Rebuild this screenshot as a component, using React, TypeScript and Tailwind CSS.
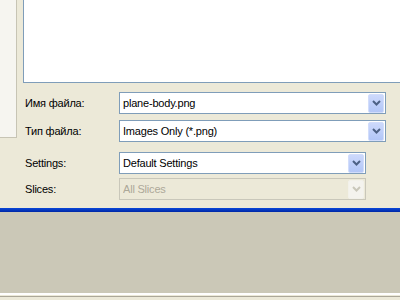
import React from 'react'

function Chevron({ disabled }: { disabled?: boolean }) {
  return (
    <svg width="9" height="6" viewBox="0 0 9 6" className="block">
      <path
        d="M1 1 L4.5 4.5 L8 1"
        fill="none"
        stroke={disabled ? '#c9c7ba' : '#4d6185'}
        strokeWidth="2"
      />
    </svg>
  )
}

function Combo({
  value,
  width,
  disabled,
}: {
  value: string
  width: string
  disabled?: boolean
}) {
  return (
    <div
      className={`flex h-[22px] items-center border pl-[3px] pr-px ${width} ${
        disabled ? 'border-[#c9c7ba] bg-[#ece9d8] text-[#aca899]' : 'border-[#7f9db9] bg-white text-black'
      }`}
    >
      <span className="flex-1 truncate leading-none">{value}</span>
      <div
        className={`flex h-[19px] w-[16px] items-center justify-center rounded-[2px] border ${
          disabled
            ? 'border-[#f2f1ea] bg-[#f4f3ee]'
            : 'border-[#d2ddfb] bg-gradient-to-b from-[#cdd9fc] to-[#b2c6f7]'
        }`}
      >
        <Chevron disabled={disabled} />
      </div>
    </div>
  )
}

function Row({ label, children, mt }: { label: string; children: React.ReactNode; mt: string }) {
  return (
    <div className={`flex items-center ${mt}`}>
      <span className="w-[96px] pl-[2px] leading-none text-black">{label}</span>
      {children}
    </div>
  )
}

export default function App() {
  return (
    <div
      className="relative flex h-[300px] w-[400px] flex-col overflow-hidden bg-[#ece9d8] text-[11px] tracking-[-0.2px]"
      style={{ fontFamily: '"Liberation Sans", Arial, sans-serif' }}
    >
      <div className="flex h-[208px]">
        {/* places bar */}
        <div className="h-[138px] w-[17px] shrink-0 border-r border-b border-[#c7c4b4] bg-[#f6f5f0]" />
        <div className="flex flex-1 flex-col pl-[6px]">
          {/* file list */}
          <div className="h-[83px] w-[400px] border-b border-l border-[#7f9db9] bg-white" />

          <Row label="Имя файла:" mt="mt-[9px]">
            <Combo value="plane-body.png" width="w-[267px]" />
          </Row>
          <Row label="Тип файла:" mt="mt-[6px]">
            <Combo value="Images Only (*.png)" width="w-[267px]" />
          </Row>
          <Row label="Settings:" mt="mt-[10px]">
            <Combo value="Default Settings" width="w-[247px]" />
          </Row>
          <Row label="Slices:" mt="mt-[4px]">
            <Combo value="All Slices" width="w-[247px]" disabled />
          </Row>
        </div>
      </div>

      {/* blue separator */}
      <div className="h-[4px] bg-gradient-to-b from-[#0b47d8] to-[#0027a6]" />
      <div className="h-[81px] bg-[#cbc8b7]" />
      <div className="h-[2px] bg-white" />
      <div className="h-px bg-[#ece9d8]" />
      <div className="h-px bg-[#aca899]" />
      <div className="flex-1 bg-[#ece9d8]" />
    </div>
  )
}
